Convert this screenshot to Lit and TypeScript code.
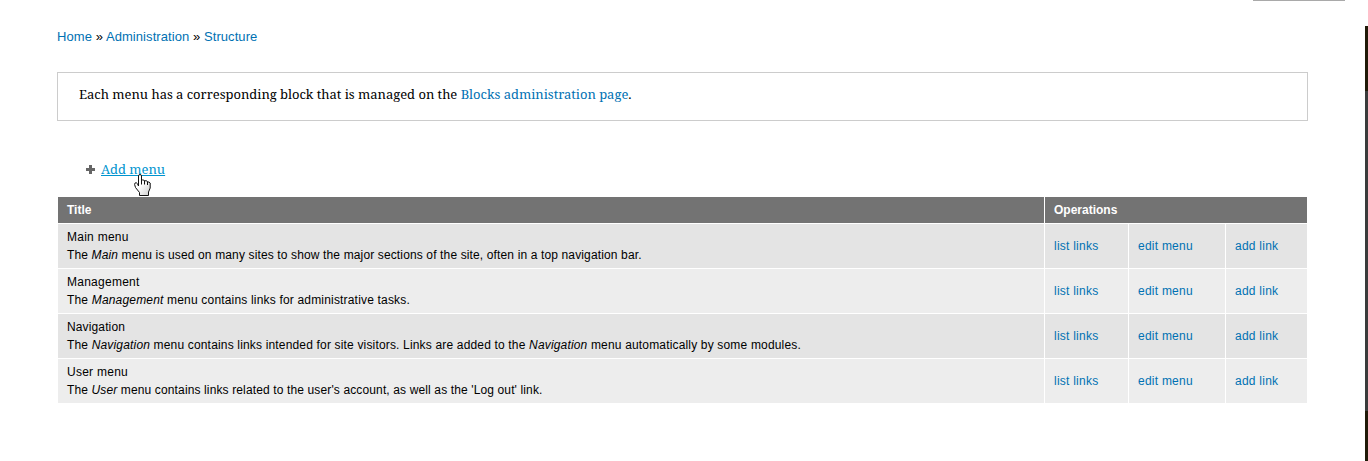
import { LitElement, html, css } from "lit";
import { customElement } from "lit/decorators.js";

const rows = [
  { key: "main", title: "Main menu", text: html`The <em>Main</em> menu is used on many sites to show the major sections of the site, often in a top navigation bar.` },
  { key: "management", title: "Management", text: html`The <em>Management</em> menu contains links for administrative tasks.` },
  { key: "navigation", title: "Navigation", text: html`The <em>Navigation</em> menu contains links intended for site visitors. Links are added to the <em>Navigation</em> menu automatically by some modules.` },
  { key: "user", title: "User menu", text: html`The <em>User</em> menu contains links related to the user's account, as well as the 'Log out' link.` },
];

@customElement("app-root")
export class AppRoot extends LitElement {
  static styles = css`
    :host {
      display: flex;
      box-sizing: border-box;
      width: 100%;
      height: 461px;
      overflow: hidden;
      background: #fff;
      color: #000;
      font: 12px/18px "Liberation Sans", Arial, sans-serif;
    }
    a { color: #0071b3; text-decoration: none; white-space: nowrap; }
    .page { width: 1251px; margin-left: 57px; }
    .tab { width: 92px; height: 1px; background: #a9a9a9; margin-left: 1196px; }
    .crumbs { height: 20px; margin-top: 26px; font-size: 13px; line-height: 20px; white-space: nowrap; letter-spacing: 0.07px; }
    .help {
      box-sizing: border-box;
      height: 49px;
      margin-top: 25px;
      padding: 10px 21px;
      border: 1px solid #ccc;
      font: 13px/22px "Noto Serif", "Liberation Serif", serif;
      letter-spacing: -0.03px;
      white-space: nowrap;
    }
    .actions {
      display: flex;
      align-items: center;
      height: 22px;
      margin: 37px 0 17px 28px;
      font: 13px/22px "Noto Serif", "Liberation Serif", serif;
    }
    .plus { width: 11px; height: 11px; margin-right: 5px; }
    .add { position: relative; color: #0094cf; text-decoration: underline; text-underline-offset: 1px; text-decoration-thickness: 1px; }
    .hand { position: absolute; left: 33px; top: 16px; width: 17px; height: 22px; }
    .grid {
      display: grid;
      grid-template-columns: 986px 83px 96px 81px;
      gap: 1px;
      margin-left: 1px;
    }
    .head { height: 26px; line-height: 26px; padding-left: 9px; background: #737373; color: #fff; font-weight: bold; }
    .wide { grid-column: span 3; }
    .cell { box-sizing: border-box; height: 44px; padding: 4px 9px; background: #e4e4e4; white-space: nowrap; }
    .op { padding-top: 13px; letter-spacing: 0.24px; }
    .even { background: #ededed; }
    .title { letter-spacing: 0.26px; }
    .title.navigation { letter-spacing: 0.13px; }
    .text.main { letter-spacing: 0.135px; }
    .text.management { letter-spacing: 0.18px; }
    .text.navigation { letter-spacing: 0.168px; }
    .text.user { letter-spacing: 0.13px; }
    .edge { flex: none; width: 3px; margin: 26px 0 0 auto; background: linear-gradient(#201a08 65px, #3a3b3b 65px 385px, #201a08 385px); }
  `;

  render() {
    return html`
      <main class="page">
        <div class="tab"></div>
        <nav class="crumbs"><a>Home</a> » <a>Administration</a> » <a>Structure</a></nav>
        <section class="help">Each menu has a corresponding block that is managed on the <a>Blocks administration page</a>.</section>
        <div class="actions">
          <svg class="plus" viewBox="0 0 11 11"><path d="M4 1h3v3h3v3H7v3H4V7H1V4h3z" fill="#666" /></svg>
          <a class="add">Add menu<svg class="hand" viewBox="0 0 17 22">
            <defs><linearGradient id="shade" x1="0" y1="0" x2="1" y2="1"><stop offset=".45" stop-color="#fff" /><stop offset="1" stop-color="#ccc" /></linearGradient></defs>
            <path d="M4.500 12V2Q4.500.5 6 .5T7.500 2V6.500Q8.500 5.200 10.500 6.500V7Q12 6 13.500 7.500V8Q15 7.500 16.200 9V14L14.500 18V21.500H5.500V18.500L1.500 13.500 .6 10.500Q.6 8.500 2.200 8.700 3.500 9 4.500 12Z" fill="url(#shade)" stroke="#111" />
            <path d="M7.500 6V10.500M10.500 7V10.500M13.500 8V11" fill="none" stroke="#111" />
          </svg></a>
        </div>
        <div class="grid">
          <div class="head">Title</div><div class="head wide">Operations</div>
          ${rows.map((r, i) => {
            const tone = i % 2 ? "even" : "";
            return html`
              <div class="cell ${tone}"><div class="title ${r.key}">${r.title}</div><div class="text ${r.key}">${r.text}</div></div>
              <div class="cell op ${tone}"><a>list links</a></div>
              <div class="cell op ${tone}"><a>edit menu</a></div>
              <div class="cell op ${tone}"><a>add link</a></div>`;
          })}
        </div>
      </main>
      <div class="edge"></div>
    `;
  }
}
